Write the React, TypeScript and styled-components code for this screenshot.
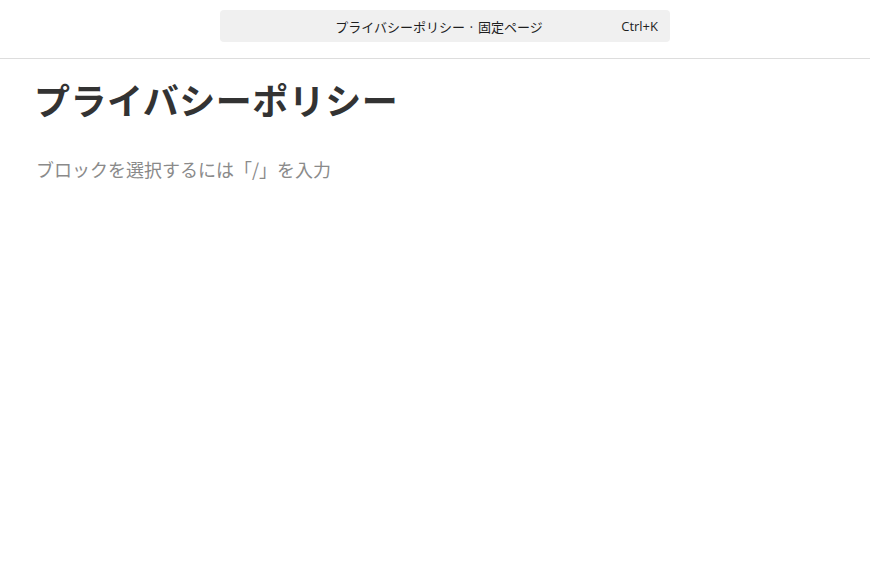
import React from 'react'
import styled, { createGlobalStyle } from 'styled-components'

const GlobalStyle = createGlobalStyle`
  html, body {
    margin: 0;
    padding: 0;
    background: #fff;
    font-family: "Noto Sans CJK JP", "Noto Sans", sans-serif;
  }
`

const Header = styled.header`
  height: 59px;
  border-bottom: 1px solid #dddddd;
  display: flex;
  justify-content: center;
  align-items: flex-start;
  padding: 10px 0 0 20px;
  box-sizing: border-box;
`

const CommandBar = styled.div`
  width: 450px;
  height: 32px;
  background: #f0f0f0;
  border-radius: 4px;
  position: relative;
  display: flex;
  align-items: center;
  justify-content: center;
  font-size: 13px;
  color: #1e1e1e;
  padding-right: 12px;
  box-sizing: border-box;
`

const Shortcut = styled.span`
  position: absolute;
  right: 12px;
  top: 50%;
  transform: translateY(-50%);
  font-family: "Open Sans", "Noto Sans", sans-serif;
  font-size: 13px;
  color: #1e1e1e;
`

const Editor = styled.main`
  padding: 15px 34px;
`

const Title = styled.h1`
  margin: 0;
  font-size: 36px;
  font-weight: 700;
  color: #333;
  line-height: 1.4;
  letter-spacing: 0.5px;
`

const Placeholder = styled.p`
  margin: 32px 0 0 2px;
  font-size: 18px;
  color: #8a8a8a;
  line-height: 1.5;
`

export default function App() {
  return (
    <>
      <GlobalStyle />
      <Header>
        <CommandBar>
          プライバシーポリシー · 固定ページ
          <Shortcut>Ctrl+K</Shortcut>
        </CommandBar>
      </Header>
      <Editor>
        <Title>プライバシーポリシー</Title>
        <Placeholder>ブロックを選択するには「/」を入力</Placeholder>
      </Editor>
    </>
  )
}
